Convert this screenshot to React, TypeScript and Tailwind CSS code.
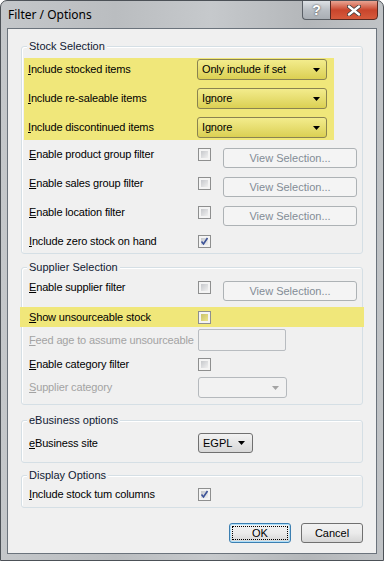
import type { ReactNode } from 'react'

const font = "font-['Liberation_Sans',Arial,sans-serif]"

function Key({ text, disabled }: { text: string; disabled?: boolean }) {
  return (
    <span className={`w-[169px] shrink-0 leading-[13px] whitespace-nowrap tracking-[-0.15px] ${disabled ? 'text-[#a3a3a3]' : 'text-black'}`}>
      <u className="underline-offset-1">{text[0]}</u>
      {text.slice(1)}
    </span>
  )
}

function Check({ checked, yellow }: { checked?: boolean; yellow?: boolean }) {
  return (
    <div className="w-[13px] h-[13px] shrink-0 border border-[#8e8f8f] bg-[#f4f4f4] p-[2px]">
      <div
        className={`relative w-full h-full ${
          yellow
            ? 'bg-gradient-to-br from-[#c9c26a] to-[#ece48a]'
            : 'bg-gradient-to-br from-[#c6c8cc] to-[#f0f0f0]'
        }`}
      >
        {checked && (
          <svg viewBox="0 0 9 9" className="absolute -left-[1px] -top-[1px] w-[9px] h-[9px]">
            <path d="M1.5 4.5 L3.5 7 L7.5 1" fill="none" stroke="#3d5499" strokeWidth="1.6" />
          </svg>
        )}
      </div>
    </div>
  )
}

function Arrow({ color = '#000' }: { color?: string }) {
  return (
    <svg viewBox="0 0 7 4" className="w-[7px] h-[4px]">
      <path d="M0 0 H7 L3.5 4 Z" fill={color} />
    </svg>
  )
}

function Combo({ value, yellow }: { value: string; yellow?: boolean }) {
  return (
    <div
      className={`w-[130px] h-[21px] rounded-[3px] border flex items-center justify-between pl-[4px] pr-[6px] ${
        yellow
          ? 'border-[#8a8350] bg-gradient-to-b from-[#f3ec8c] to-[#dbd052]'
          : 'border-[#707070] bg-gradient-to-b from-[#f2f2f2] to-[#dadada]'
      }`}
    >
      <span className="leading-[13px] tracking-[-0.15px]">{value}</span>
      <Arrow />
    </div>
  )
}

function ViewButton() {
  return (
    <div className="w-[134px] h-[20px] rounded-[3px] border border-[#adb2b5] bg-[#f4f4f4] flex items-center justify-center text-[#838c96] leading-[13px]">
      View Selection...
    </div>
  )
}

function Group({ title, className, children }: { title: string; className: string; children: ReactNode }) {
  return (
    <div className={`relative mx-[13px] border border-[#d5dfe5] rounded-[3px] shadow-[inset_1px_1px_0_#ffffff] ${className}`}>
      <span className="absolute -top-[7px] left-[5px] px-[2px] bg-[#f0f0f0] leading-[13px] text-[#101a33]">
        {title}
      </span>
      {children}
    </div>
  )
}

function Button({ label, focused }: { label: string; focused?: boolean }) {
  return (
    <div
      className={`w-[62px] h-[20px] rounded-[3px] border p-[2px] bg-gradient-to-b from-[#f2f2f2] via-[#ebebeb] to-[#d6d6d6] ${
        focused ? 'border-[#3c7fb1] shadow-[inset_0_0_0_1px_#aee0fb]' : 'border-[#707070]'
      }`}
    >
      <div
        className={`w-full h-full flex items-center justify-center leading-[13px] ${
          focused ? 'border border-dotted border-black' : ''
        }`}
      >
        {label}
      </div>
    </div>
  )
}

export default function App() {
  return (
    <div className={`w-[384px] h-[561px] ${font} text-[11px] text-black`}>
      <div className="w-full h-full flex flex-col border border-[#4c5157] rounded-t-[7px] bg-[linear-gradient(90deg,#c4c7ca_0%,#babdc0_30%,#c6c9cc_55%,#b4b7ba_80%,#c0c3c6_100%)] overflow-hidden">
        {/* Title bar */}
        <div className="h-[27px] shrink-0 flex items-start justify-between">
          <span className="pl-[7px] pt-[6px] text-[12px] leading-[16px] font-['Noto_Sans',Arial,sans-serif] text-black">
            Filter / Options
          </span>
          <div className="flex -mt-px mr-[5px]">
            <div className="w-[28px] h-[20px] rounded-bl-[4px] border border-[#5a5f66] border-r-0 bg-gradient-to-b from-[#dde1e5] via-[#b9bec4] to-[#a9aeb4] flex items-center justify-center">
              <span className="text-white font-bold text-[14px] leading-[14px] [text-shadow:0_0_2px_#333]">?</span>
            </div>
            <div className="w-[48px] h-[20px] rounded-br-[4px] border border-[#5a2a22] bg-gradient-to-b from-[#e8a493] via-[#c9452c] to-[#d65a3c] flex items-center justify-center">
              <svg viewBox="0 0 14 11" className="w-[14px] h-[11px]">
                <path d="M2 1.5 L12 9.5 M12 1.5 L2 9.5" stroke="#3a3a3a" strokeWidth="4" strokeLinecap="round" />
                <path d="M2 1.5 L12 9.5 M12 1.5 L2 9.5" stroke="#ffffff" strokeWidth="2.4" strokeLinecap="round" />
              </svg>
            </div>
          </div>
        </div>

        {/* Client area */}
        <div className="flex-1 mx-[6px] mb-[6px] border border-[#6b737c] bg-[#f0f0f0] flex flex-col pt-[17px]">
          <Group title="Stock Selection" className="pt-[11px] pb-[5px]">
            <div className="mx-[2px] w-[310px] bg-[#f0e77a] pt-px pb-[2px] pl-[4px] flex flex-col gap-[8px]">
              <div className="flex items-center h-[21px]">
                <Key text="Include stocked items" />
                <Combo value="Only include if set" yellow />
              </div>
              <div className="flex items-center h-[21px]">
                <Key text="Include re-saleable items" />
                <Combo value="Ignore" yellow />
              </div>
              <div className="flex items-center h-[21px]">
                <Key text="Include discontinued items" />
                <Combo value="Ignore" yellow />
              </div>
            </div>
            <div className="mt-[8px] pl-[7px] flex flex-col gap-[9px]">
              <div className="flex items-start h-[20px]">
                <Key text="Enable product group filter" />
                <Check />
                <div className="ml-[12px]">
                  <ViewButton />
                </div>
              </div>
              <div className="flex items-start h-[20px]">
                <Key text="Enable sales group filter" />
                <Check />
                <div className="ml-[12px]">
                  <ViewButton />
                </div>
              </div>
              <div className="flex items-start h-[20px]">
                <Key text="Enable location filter" />
                <Check />
                <div className="ml-[12px]">
                  <ViewButton />
                </div>
              </div>
              <div className="flex items-start h-[13px]">
                <Key text="Include zero stock on hand" />
                <Check checked />
              </div>
            </div>
          </Group>

          <Group title="Supplier Selection" className="mt-[13px] pt-[13px] pb-[6px]">
            <div className="pl-[7px] flex items-start h-[20px]">
              <Key text="Enable supplier filter" />
              <Check />
              <div className="ml-[12px]">
                <ViewButton />
              </div>
            </div>
            <div className="mt-[6px] -mx-[2px] h-[20px] bg-[#f0e77a] pl-[9px] flex items-center">
              <Key text="Show unsourceable stock" />
              <Check yellow />
            </div>
            <div className="mt-[2px] pl-[7px] flex items-center h-[22px]">
              <Key text="Feed age to assume unsourceable" disabled />
              <div className="w-[88px] h-[22px] border border-[#b8bcc0] rounded-[2px] bg-[#f0f0f0]" />
            </div>
            <div className="mt-[7px] pl-[7px] flex items-center h-[13px]">
              <Key text="Enable category filter" />
              <Check />
            </div>
            <div className="mt-[6px] pl-[7px] flex items-center h-[21px]">
              <Key text="Supplier category" disabled />
              <div className="w-[89px] h-[21px] border border-[#b5b9bd] rounded-[3px] bg-[#f2f2f2] flex items-center justify-end pr-[7px]">
                <Arrow color="#a4a4a4" />
              </div>
            </div>
          </Group>

          <Group title="eBusiness options" className="mt-[15px] pt-[12px] pb-[9px]">
            <div className="pl-[7px] flex items-center h-[20px]">
              <Key text="eBusiness site" />
              <div className="w-[55px] h-[20px] rounded-[3px] border border-[#707070] bg-gradient-to-b from-[#f2f2f2] to-[#d8d8d8] flex items-center justify-between pl-[4px] pr-[7px]">
                <span className="leading-[13px]">EGPL</span>
                <Arrow />
              </div>
            </div>
          </Group>

          <Group title="Display Options" className="mt-[12px] pt-[12px] pb-[6px]">
            <div className="pl-[7px] flex items-center h-[13px]">
              <Key text="Include stock tum columns" />
              <Check checked />
            </div>
          </Group>

          <div className="mt-[15px] pr-[13px] flex justify-end gap-[10px]">
            <Button label="OK" focused />
            <Button label="Cancel" />
          </div>
        </div>
      </div>
    </div>
  )
}
